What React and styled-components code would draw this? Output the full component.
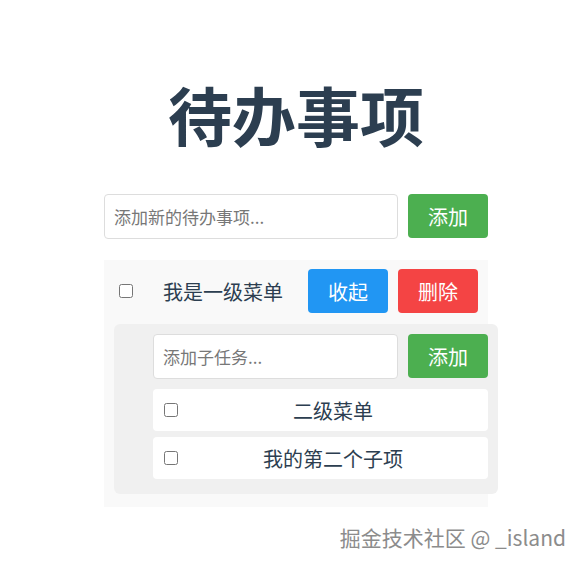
import styled, { createGlobalStyle } from "styled-components";

const GlobalStyle = createGlobalStyle`
  body {
    margin: 0;
    background: #fff;
    font-family: "Microsoft YaHei", "Noto Sans CJK SC", "Liberation Sans", sans-serif;
  }
`;

const Page = styled.div`
  width: 583px;
  min-height: 565px;
  padding: 81px 0 0 9px;
  box-sizing: border-box;
  display: flex;
  flex-direction: column;
  align-items: center;
`;

const Title = styled.h1`
  margin: 0 0 49px;
  font-size: 64px;
  line-height: 64px;
  font-weight: 700;
  color: #2c3e50;
`;

const Column = styled.div`
  width: 384px;
`;

const AddRow = styled.div`
  display: flex;
  gap: 10px;
  align-items: flex-start;
`;

const Input = styled.input`
  flex: 1;
  height: 45px;
  box-sizing: border-box;
  padding: 0 9px;
  border: 1px solid #ddd;
  border-radius: 4px;
  font-size: 17px;
  font-family: inherit;
  color: #333;
  outline: none;
  &::placeholder { color: #777; }
`;

const Button = styled.button`
  width: 80px;
  height: 44px;
  border: none;
  border-radius: 4px;
  background: ${(p) => p.$bg};
  color: #fff;
  font-size: 20px;
  font-family: inherit;
  cursor: pointer;
`;

const List = styled.div`
  margin-top: 21px;
  background: #f9f9f9;
  padding-bottom: 13px;
`;

const ItemRow = styled.div`
  display: flex;
  align-items: center;
  gap: 10px;
  padding: 9px 10px 11px 15px;
`;

const Check = styled.input.attrs({ type: "checkbox" })`
  width: 14px;
  height: 14px;
  margin: 0;
  accent-color: #666;
`;

const ItemText = styled.span`
  flex: 1;
  text-align: center;
  font-size: 20px;
  color: #2c3e50;
  padding-left: 5px;
`;

const Nested = styled.div`
  width: 100%;
  margin-left: 10px;
  box-sizing: border-box;
  background: #f0f0f0;
  border-radius: 6px;
  padding: 10px 10px 15px 39px;
  display: flex;
  flex-direction: column;
  gap: 10px;
`;

const SubList = styled.div`
  display: flex;
  flex-direction: column;
  gap: 6px;
`;

const SubItem = styled.div`
  height: 42px;
  background: #fff;
  border-radius: 4px;
  display: flex;
  align-items: center;
  padding-left: 11px;
`;

const SubText = styled.span`
  flex: 1;
  text-align: center;
  font-size: 20px;
  color: #2c3e50;
`;

const Watermark = styled.div`
  position: absolute;
  right: 17px;
  top: 522px;
  font-size: 21px;
  color: #8c8c8c;
  text-shadow: 0 0 2px #fff, 0 0 1px #fff;
  font-family: "Noto Sans CJK SC", "Liberation Sans", sans-serif;
`;

const subs = ["二级菜单", "我的第二个子项"];

export default function App() {
  return (
    <>
      <GlobalStyle />
      <Page>
        <Title>待办事项</Title>
        <Column>
          <AddRow>
            <Input placeholder="添加新的待办事项..." />
            <Button $bg="#4caf50">添加</Button>
          </AddRow>
          <List>
            <ItemRow>
              <Check />
              <ItemText>我是一级菜单</ItemText>
              <Button $bg="#2196f3">收起</Button>
              <Button $bg="#f44444">删除</Button>
            </ItemRow>
            <Nested>
              <AddRow>
                <Input placeholder="添加子任务..." />
                <Button $bg="#4caf50">添加</Button>
              </AddRow>
              <SubList>
                {subs.map((s) => (
                  <SubItem key={s}>
                    <Check />
                    <SubText>{s}</SubText>
                  </SubItem>
                ))}
              </SubList>
            </Nested>
          </List>
        </Column>
      </Page>
      <Watermark>掘金技术社区 @ _island</Watermark>
    </>
  );
}
